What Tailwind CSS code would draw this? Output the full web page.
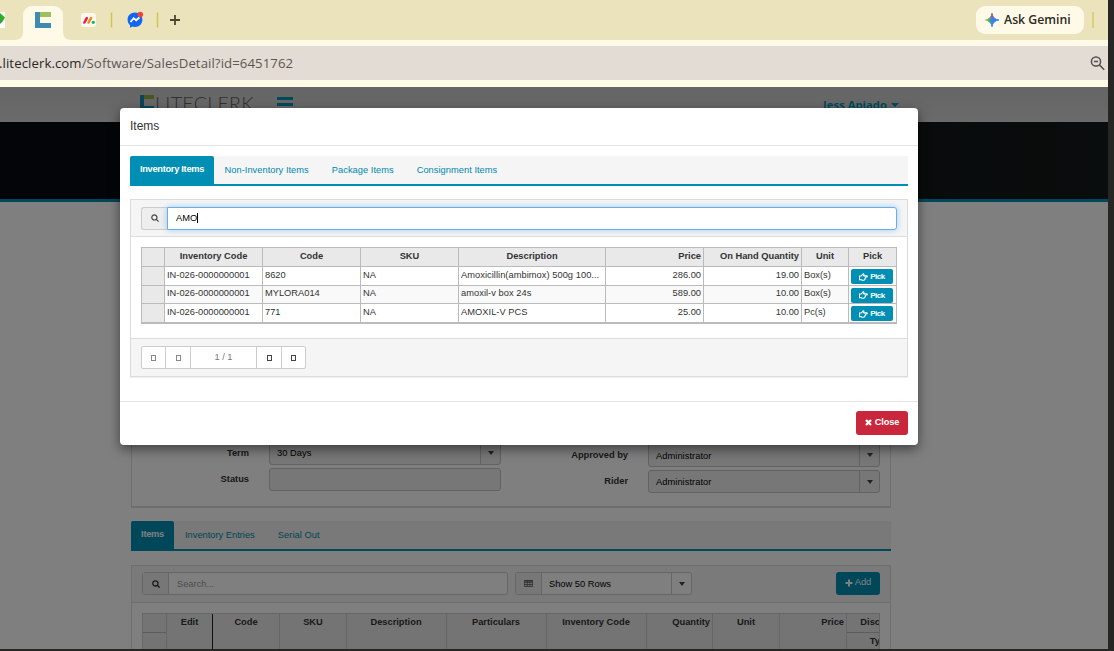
<!DOCTYPE html>
<html lang="en">
<head>
    <meta charset="UTF-8">
    <meta name="viewport" content="width=device-width, initial-scale=1.0">
    <title>Sales Detail</title>
    <script src="https://cdn.jsdelivr.net/npm/@tailwindcss/browser@4"></script>
</head>
<body class="bg-[#262625] w-[1114px] h-[651px] overflow-hidden font-['Liberation_Sans',sans-serif]">
    <div class="w-[1108px] h-[649px] flex flex-col overflow-hidden">

        <!-- Browser tabs -->
        <div class="h-10 shrink-0 bg-[#ebe3bb] flex items-center font-['Open_Sans',sans-serif]">
            <svg class="w-[23px] h-10" viewBox="0 0 23 40">
                <path d="M0 12h4q1 0 1 1v14q0 1-1 1H0z" fill="#fff"/>
                <path d="M0 13l5 4.500-2 3.500H0z" fill="#2fae2b"/><path d="M0 21h3l-3 3z" fill="#3e8f36"/>
                <path d="M14 40q9 0 9-8v8z" fill="#fff9e8"/>
            </svg>
            <div class="w-10 h-[34px] self-end bg-[#fff9e8] rounded-t-[9px] flex justify-center">
                <svg class="mt-1.5 w-4 h-4" viewBox="0 0 16 16">
                    <path d="M0 0h5v11h11v5H0z" fill="#3d8bb0"/>
                    <path d="M5 0h11v5H5z" fill="#9cc05c"/>
                </svg>
            </div>
            <svg class="w-[130px] h-10" viewBox="0 0 130 40">
                <path d="M0 32q0 8 9 8H0z" fill="#fff9e8"/>
                <rect x="18" y="13" width="15" height="14" rx="3" fill="#fdf8ea"/>
                <g stroke-width="2.600" stroke-linecap="round">
                    <path d="M21.400 22.500l2.400-4.400" stroke="#e8205a"/>
                    <path d="M25.600 22.500l2.400-4.400" stroke="#f08a1d"/>
                </g>
                <circle cx="30.300" cy="22.300" r="1.600" fill="#12b76a"/>
                <path d="M48.500 12.500v15M94.500 12.500v15" stroke="#d2c64f" stroke-width="1.500"/>
                <path d="M72 12.500c-4.300 0-7.400 3.100-7.400 7.200 0 2.100.9 4 2.400 5.300v2.700l2.500-1.200c.8.200 1.600.4 2.500.4 4.300 0 7.400-3.100 7.400-7.200s-3.100-7.200-7.400-7.200z" fill="#1266f1"/>
                <path d="M67.500 22l3.200-3.800 2.500 2 3.200-2.700" fill="none" stroke="#fff" stroke-width="1.900"/>
                <circle cx="77.300" cy="14.500" r="2.800" fill="#f0443a"/>
                <path d="M112 15v10M107 20h10" stroke="#4a452f" stroke-width="1.800"/>
            </svg>
            <div class="ml-auto w-[108px] h-7 rounded-[9px] bg-[#fff9e8] flex items-center pl-[9px] gap-1.5 text-[12.3px] font-semibold text-[#2c2a22] whitespace-nowrap">
                <svg class="w-3.5 h-3.5 shrink-0" viewBox="0 0 14 14">
                    <defs>
                        <linearGradient id="spark" x1="0" y1=".5" x2="1" y2=".5">
                            <stop offset="0" stop-color="#f7c21c"/><stop offset=".28" stop-color="#3fae6a"/>
                            <stop offset=".5" stop-color="#3b82e8"/><stop offset="1" stop-color="#3677f0"/>
                        </linearGradient>
                    </defs>
                    <path d="M7 0Q7.800 6.200 14 7 7.800 7.800 7 14 6.200 7.800 0 7 6.200 6.200 7 0z" fill="url(#spark)" stroke="url(#spark)" stroke-width=".8"/>
                    <path d="M7 0l1.300 4.500-2.600 0z" fill="#e9483c"/>
                </svg>
                <span class="-ml-px">Ask Gemini</span>
            </div>
            <div class="w-0.5 h-4 ml-2 mr-3.5 bg-[#dcd17a]"></div>
        </div>

        <!-- Address bar -->
        <div class="h-[47px] shrink-0 bg-[#fff9e8] pt-1.5 pb-[7px] flex">
            <div class="flex-1 bg-[#e2dcd5] flex items-center justify-between pr-[3px] font-['Open_Sans',sans-serif] text-[13.200px] text-[#5c5750]">
                <span class="-ml-px pt-px tracking-[.08px]"><span class="text-[#2b2824]">.liteclerk.com</span>/Software/SalesDetail?id=6451762</span>
                <svg class="w-[15px] h-[15px]" viewBox="0 0 15 15" fill="none" stroke="#55504a" stroke-width="1.500">
                    <circle cx="6" cy="5.500" r="4.600"/><path d="M9.400 8.900l4.800 4.800M3.900 5.500h4.200"/>
                </svg>
            </div>
        </div>

        <!-- Page -->
        <div class="relative flex-1 min-h-0 overflow-hidden bg-white text-[9.300px] text-[#333]">
            <div class="h-[35px] bg-linear-to-b from-[#cacaca] to-[#d6d6d6] flex items-start pl-[140px] pr-[209px] pt-[7px]">
                <svg class="w-[15px] h-[18px]" viewBox="0 0 15 18">
                    <path d="M0 1h4v11h10v4H0z" fill="#1789b4"/><path d="M4 1h10v4H4z" fill="#8fae3c"/>
                </svg>
                <span class="w-[103px] font-['Lato',sans-serif] font-light text-[19.500px] leading-[19px] tracking-[.35px] text-[#606060]">LITECLERK</span>
                <div class="ml-[19px] mt-[3px] flex flex-col gap-[3px] *:w-4 *:h-[3px] *:bg-[#0093b8]">
                    <div></div><div></div><div></div>
                </div>
                <div class="ml-auto mt-[3px] flex items-center gap-1 font-['Open_Sans',sans-serif] text-[11.300px] font-bold leading-4 text-[#0093b8]">Jess Apiado
                    <svg class="w-2 h-1" viewBox="0 0 8 4"><path d="M0 0h8L4 4z" fill="#0093b8"/></svg>
                </div>
            </div>
            <div class="h-20 bg-linear-to-r from-[#060a12] via-[#0d1212] to-[#151a1a] border-b-[3px] border-[#008fb4]"></div>

            <div class="w-[760px] ml-[131px]">
                <!-- Header form -->
                <div class="h-[306px] border border-t-0 border-[#dcdcdc] border-b-2 flex items-end">
                    <div class="w-[370px] pb-[15px] flex flex-col gap-[3px]">
                        <div class="flex h-6">
                            <label class="w-[117px] mr-[20px] text-right font-bold leading-[25px]">Term</label>
                            <div class="w-[232px] border border-[#c4c4c4] rounded-[3px] bg-[#eee] flex text-black">
                                <span class="flex-1 pl-[7px] leading-[22px] tracking-[.05px]">30 Days</span>
                                <span class="w-5 border-l border-[#c4c4c4] flex items-center justify-center"><svg class="w-1.5 h-1" viewBox="0 0 6 4"><path d="M0 0h6L3 4z" fill="#444"/></svg></span>
                            </div>
                        </div>
                        <div class="flex h-[23px]">
                            <label class="w-[117px] mr-[20px] text-right font-bold leading-[23px]">Status</label>
                            <div class="w-[232px] border border-[#c4c4c4] rounded-[3px] bg-[#eee]"></div>
                        </div>
                    </div>
                    <div class="w-[379px] pb-[13px] flex flex-col gap-[3px]">
                        <div class="flex h-6">
                            <label class="w-[126px] mr-[20px] text-right font-bold leading-[24px]">Approved by</label>
                            <div class="w-[232px] border border-[#c4c4c4] rounded-[3px] bg-[#eee] flex text-black">
                                <span class="flex-1 pl-[7px] leading-[24px] tracking-[.05px]">Administrator</span>
                                <span class="w-5 border-l border-[#c4c4c4] flex items-center justify-center"><svg class="w-1.5 h-1" viewBox="0 0 6 4"><path d="M0 0h6L3 4z" fill="#444"/></svg></span>
                            </div>
                        </div>
                        <div class="flex h-[23px]">
                            <label class="w-[126px] mr-[20px] text-right font-bold leading-[22px]">Rider</label>
                            <div class="w-[232px] border border-[#c4c4c4] rounded-[3px] bg-[#eee] flex text-black">
                                <span class="flex-1 pl-[7px] leading-[22px] tracking-[.05px]">Administrator</span>
                                <span class="w-5 border-l border-[#c4c4c4] flex items-center justify-center"><svg class="w-1.5 h-1" viewBox="0 0 6 4"><path d="M0 0h6L3 4z" fill="#444"/></svg></span>
                            </div>
                        </div>
                    </div>
                </div>

                <!-- Detail tabs -->
                <div class="mt-[13px] h-[30px] border-b-2 border-[#008fb4] bg-[#f3f3f3] flex text-[#0088ad]">
                    <div class="w-[43px] bg-[#008fb4] h-[28px] rounded-t-[2px] text-white font-bold leading-[26px] text-center tracking-[-.3px]">Items</div>
                    <div class="ml-[11px] leading-[28px]">Inventory Entries</div>
                    <div class="ml-[23px] leading-[28px] tracking-[.05px]">Serial Out</div>
                </div>

                <!-- Detail panel -->
                <div class="mt-3.5 border border-[#dcdcdc]">
                    <div class="h-[37px] bg-[#f5f5f5] border-b border-[#dcdcdc] px-[10px] pb-px flex items-center">
                        <div class="w-[366px] h-[23px] border border-[#ccc] rounded-[3px] bg-white flex">
                            <span class="w-[26px] border-r border-[#ccc] bg-[#eee] flex items-center justify-center">
                                <svg class="w-2 h-2" viewBox="0 0 8 8" fill="none" stroke="#333" stroke-width="1.300"><circle cx="3.400" cy="3.400" r="2.600"/><path d="M5.300 5.300l2.300 2.300"/></svg>
                            </span>
                            <span class="pl-2 leading-[22px] text-[#999]">Search...</span>
                        </div>
                        <div class="ml-[7px] w-[177px] h-[23px] border border-[#ccc] rounded-[3px] bg-white flex text-black">
                            <span class="w-[26px] border-r border-[#ccc] bg-[#eee] flex items-center justify-center">
                                <svg class="w-[9px] h-[7px]" viewBox="0 0 9 7" fill="none" stroke="#555" stroke-width=".8"><path d="M.4.4h8.200v6.200H.4zM.4 2.400h8.200M.4 4.500h8.200M3.200.4v6.200M5.900.4v6.200"/><path d="M.4.800h8.200" stroke-width="1.300"/></svg>
                            </span>
                            <span class="flex-1 pl-[7px] leading-[22px]">Show 50 Rows</span>
                            <span class="w-5 border-l border-[#ccc] flex items-center justify-center"><svg class="w-1.5 h-1" viewBox="0 0 6 4"><path d="M0 0h6L3 4z" fill="#444"/></svg></span>
                        </div>
                        <button class="ml-auto w-11 h-[23px] rounded-[3px] bg-[#008fb4] text-white flex items-center justify-center gap-0.5 pb-px">
                            <svg class="w-2 h-2" viewBox="0 0 8 8"><path d="M3 .5h2V3h2.500v2H5v2.500H3V5H.5V3H3z" fill="#fff"/></svg>Add
                        </button>
                    </div>
                    <div class="mt-2.5 mx-[10px] h-[60px] border border-[#ccc] bg-[#e9e9e9] flex font-bold text-center leading-[16px] overflow-hidden">
                        <div class="w-6 shrink-0 border-r border-[#ccc]"><div class="h-[19px] border-b border-[#bbb]"></div></div>
                        <div class="w-[46px] shrink-0 border-r border-[#222]">Edit</div>
                        <div class="w-[67px] shrink-0 border-r border-[#ccc]">Code</div>
                        <div class="w-[67px] shrink-0 border-r border-[#ccc]">SKU</div>
                        <div class="w-[100px] shrink-0 border-r border-[#ccc] pr-px">Description</div>
                        <div class="w-[100px] shrink-0 border-r border-[#ccc] pr-px">Particulars</div>
                        <div class="w-[100px] shrink-0 border-r border-[#ccc] pr-px">Inventory Code</div>
                        <div class="w-[66px] shrink-0 border-r border-[#ccc] text-right pr-0.5">Quantity</div>
                        <div class="w-[67px] shrink-0 border-r border-[#ccc]">Unit</div>
                        <div class="w-[67px] shrink-0 border-r border-[#ccc] text-right pr-0.5">Price</div>
                        <div class="w-[33px] shrink-0 text-right"><div class="h-[19px] border-b border-[#bbb]">Disc</div>Ty</div>
                    </div>
                </div>
            </div>

            <!-- Backdrop and dialog -->
            <div class="absolute inset-0 bg-black/50"></div>
            <div class="absolute left-[120px] top-[21px] w-[798px] h-[337px] bg-white rounded-[4px] shadow-[0_4px_12px_rgba(0,0,0,.5)] flex flex-col">
                <div class="h-[38px] border-b border-[#e5e5e5] pl-[10px] pt-px text-[12px] leading-[34px]">Items</div>
                <div class="px-[10px] pt-[10px] h-[255px]">
                    <div class="h-[30px] border-b-2 border-[#008fb4] bg-[#f5f5f5] flex text-[#0088ad] tracking-[.03px]">
                        <div class="w-[84px] h-[28px] bg-[#008fb4] rounded-t-[2px] text-white font-bold text-center leading-[26px] tracking-[-.3px]">Inventory Items</div>
                        <div class="ml-[10.500px] leading-[28px]">Non-Inventory Items</div>
                        <div class="ml-[23px] leading-[28px]">Package Items</div>
                        <div class="ml-[23px] leading-[28px]">Consignment Items</div>
                    </div>

                    <div class="mt-[13px] h-[178px] border border-[#dcdcdc] shadow-[0_1px_1px_rgba(0,0,0,.06)] flex flex-col">
                        <div class="h-[37px] bg-[#f5f5f5] border-b border-[#dcdcdc] px-[10px] flex items-center">
                            <span class="w-[26px] h-[23px] border border-r-0 border-[#ccc] rounded-l-[3px] bg-[#eee] flex items-center justify-center">
                                <svg class="w-2 h-2" viewBox="0 0 8 8" fill="none" stroke="#444" stroke-width="1.200"><circle cx="3.400" cy="3.400" r="2.600"/><path d="M5.300 5.300l2.300 2.300"/></svg>
                            </span>
                            <div class="flex-1 h-[23px] border border-[#66afe9] rounded-r-[3px] bg-white shadow-[0_0_6px_rgba(102,175,233,.6)] pl-2 flex items-center text-black"><span class="pt-px">AMO</span><span class="w-px h-[10px] bg-black"></span></div>
                        </div>
                        <div class="pt-2.5 px-[10px] h-[101px]">
                            <table class="w-[756px] table-fixed border-separate border-spacing-0 border-t border-l border-b border-[#bbb] whitespace-nowrap leading-[13px]">
                                <colgroup>
                                    <col class="w-[23px]"><col class="w-[98px]"><col class="w-[98px]"><col class="w-[98px]"><col class="w-[147px]"><col class="w-[98px]"><col class="w-[98px]"><col class="w-[47px]"><col class="w-[48px]">
                                </colgroup>
                                <thead>
                                    <tr class="h-[19px] bg-[#e9e9e9] *:border-r *:border-b *:border-[#bbb] *:p-0 *:pb-0.5">
                                        <th></th><th>Inventory Code</th><th>Code</th><th>SKU</th><th>Description</th>
                                        <th class="text-right"><span class="mr-0.5">Price</span></th>
                                        <th class="text-right"><span class="mr-0.5">On Hand Quantity</span></th><th>Unit</th><th>Pick</th>
                                    </tr>
                                </thead>
                                <tbody id="itemRows"></tbody>
                            </table>
                        </div>
                        <div class="flex-1 bg-[#f5f5f5] border-t border-[#dcdcdc] px-[10px] flex items-center">
                            <div class="flex h-[23px] border border-[#ccc] rounded-[2px] bg-white *:flex *:items-center *:justify-center">
                                <span class="w-6 border-r border-[#ccc]"><span class="w-[5px] h-[6px] border border-[#888]"></span></span>
                                <span class="w-[25px] border-r border-[#ccc]"><span class="w-[5px] h-[6px] border border-[#888]"></span></span>
                                <span class="w-[66px] border-r border-[#ccc] text-[#777]">1 / 1</span>
                                <span class="w-[25px] border-r border-[#ccc]"><span class="w-[5px] h-[6px] border border-[#444]"></span></span>
                                <span class="w-[23px]"><span class="w-[5px] h-[6px] border border-[#444]"></span></span>
                            </div>
                        </div>
                    </div>
                </div>
                <div class="h-11 border-t border-[#e5e5e5] px-[10px] pt-[9px] flex justify-end">
                    <button class="w-[52px] h-6 rounded-[3px] bg-[#c9273c] text-white font-bold flex items-center justify-center gap-[3px] pb-px tracking-[-.2px]">
                        <svg class="w-[7px] h-[7px]" viewBox="0 0 7 7"><path d="M1 1l5 5M6 1L1 6" stroke="#fff" stroke-width="2.300"/></svg>Close
                    </button>
                </div>
            </div>
        </div>
    </div>

    <script>
        const items = [
            { inv: 'IN-026-0000000001', code: '8620', sku: 'NA', desc: 'Amoxicillin(ambimox) 500g 100...', price: '286.00', qty: '19.00', unit: 'Box(s)' },
            { inv: 'IN-026-0000000001', code: 'MYLORA014', sku: 'NA', desc: 'amoxil-v box 24s', price: '589.00', qty: '10.00', unit: 'Box(s)' },
            { inv: 'IN-026-0000000001', code: '771', sku: 'NA', desc: 'AMOXIL-V PCS', price: '25.00', qty: '10.00', unit: 'Pc(s)' }
        ];
        const rowHeights = ['h-[19px]', 'h-[18px]', 'h-[19px]'];

        document.getElementById('itemRows').innerHTML = items.map((item, i) => `
            <tr class="${rowHeights[i]} *:border-r *:border-b *:border-[#bbb] *:pt-0 *:pb-0.5 *:px-0.5 even:bg-[#f9f9f9]">
                <td class="bg-[#e9e9e9]"></td>
                <td>${item.inv}</td>
                <td>${item.code}</td>
                <td>${item.sku}</td>
                <td class="tracking-[.04px]">${item.desc}</td>
                <td class="text-right">${item.price}</td>
                <td class="text-right">${item.qty}</td>
                <td>${item.unit}</td>
                <td>
                    <div class="-mb-0.5 mt-px w-[42px] h-[15px] rounded-[2px] bg-[#008fb4] text-white text-[8px] font-bold tracking-[-.5px] flex items-center justify-center gap-0.5">
                        <svg class="w-[9px] h-2" viewBox="0 0 9 8" fill="none" stroke="#fff" stroke-width="1.100"><path d="M.5 3h1.700L4 .9q1-.5.9.7L4.500 2.700h3.300q1 .7 0 1.300H6.300q.7.8-.2 1.300.3.800-.5 1.100-.1.900-1 .9H3L2 6.600H.5z"/></svg>Pick
                    </div>
                </td>
            </tr>
        `).join('');
    </script>
</body>
</html>
